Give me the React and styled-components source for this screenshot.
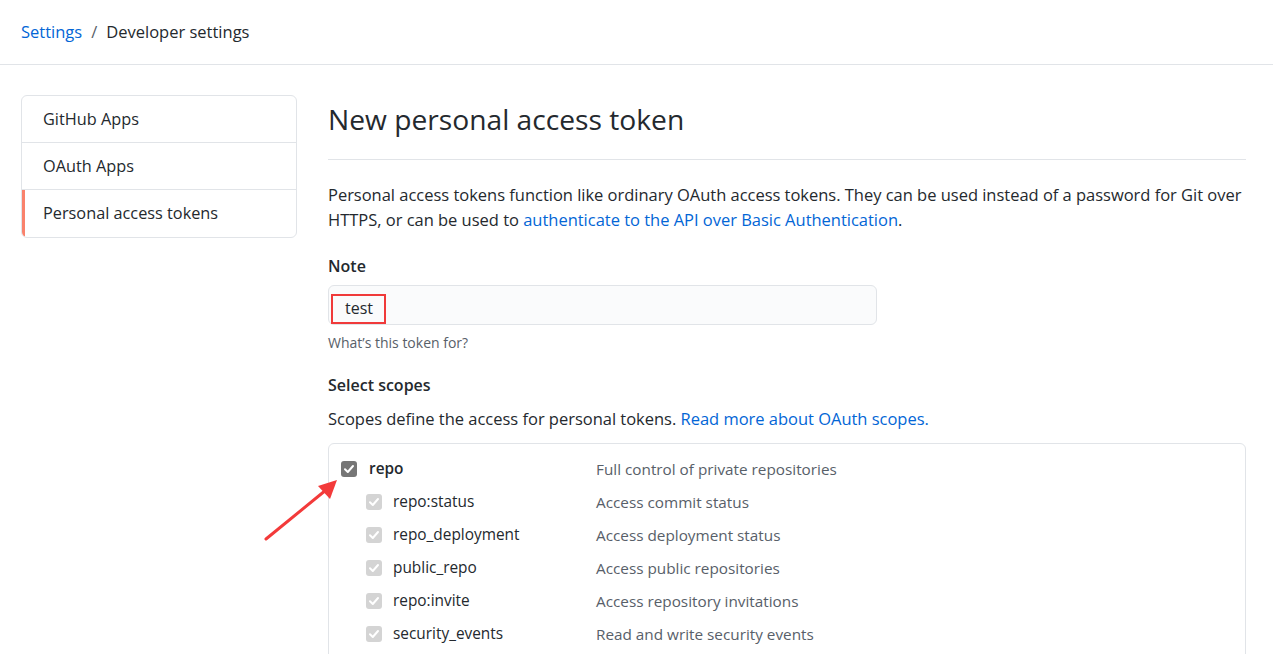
import React from "react";
import styled, { createGlobalStyle } from "styled-components";

const Global = createGlobalStyle`
  html, body { margin: 0; padding: 0; background: #fff; }
  body {
    font-family: "Open Sans", "Noto Sans", sans-serif;
    color: #24292e;
    font-size: 15px;
    overflow: hidden;
  }
  * { box-sizing: border-box; }
`;

const Page = styled.div`
  position: relative;
  width: 1273px;
  height: 654px;
  overflow: hidden;
`;

const Header = styled.header`
  height: 65px;
  border-bottom: 1px solid #e1e4e8;
  display: flex;
  align-items: center;
  padding: 0 21px 2px;
  font-size: 16.5px;
`;

const Crumb = styled.a`
  color: ${(p) => (p.$link ? "#0366d6" : "#24292e")};
  text-decoration: none;
`;

const Sep = styled.span`
  color: #586069;
  margin: 0 9px;
`;

const Body = styled.div`
  display: flex;
  gap: 31px;
  padding: 30px 27px 0 21px;
`;

const SideNav = styled.nav`
  width: 276px;
  flex: none;
  border: 1px solid #e1e4e8;
  border-radius: 6px;
  align-self: flex-start;
  overflow: hidden;
`;

const NavItem = styled.a`
  display: block;
  height: 47px;
  line-height: 46px;
  padding-left: ${(p) => (p.$active ? "18px" : "21px")};
  border-left: ${(p) => (p.$active ? "3px solid #f9826c" : "none")};
  border-bottom: ${(p) => (p.$last ? "none" : "1px solid #e1e4e8")};
  color: #24292e;
  font-size: 16.3px;
  text-decoration: none;
`;

const Main = styled.main`
  flex: 1;
  min-width: 0;
`;

const Title = styled.h1`
  margin: 0;
  font-size: 28.2px;
  font-weight: 400;
  line-height: 48px;
  padding-bottom: 16px;
  border-bottom: 1px solid #e1e4e8;
  margin-bottom: 22px;
`;

const Para = styled.p`
  margin: 0 0 ${(p) => (p.$tight ? "0" : "22px")};
  line-height: 25px;
  font-size: 16.5px;
  letter-spacing: -0.02px;
`;

const Link = styled.a`
  color: #0366d6;
  text-decoration: none;
`;

const Label = styled.div`
  font-weight: 600;
  font-size: 16px;
  line-height: 24px;
  margin-bottom: ${(p) => (p.$wide ? "9px" : "7px")};
`;

const InputBox = styled.div`
  width: 549px;
  height: 40px;
  border: 1px solid #e1e4e8;
  border-radius: 6px;
  background: #fafbfc;
  display: flex;
  padding: 0 2px;
`;

const Highlight = styled.span`
  border: 2px solid #f03a3a;
  height: 30px;
  margin-top: 8px;
  width: 55px;
  padding-left: 12px;
  line-height: 25px;
  font-size: 16px;
`;

const Hint = styled.div`
  font-size: 14px;
  color: #586069;
  margin-top: 8px;
  margin-bottom: 21px;
`;

const ScopeBox = styled.div`
  margin-top: 12px;
  border: 1px solid #e1e4e8;
  border-radius: 6px;
  padding: 8px 12px 0;
  height: 240px;
`;

const Row = styled.div`
  display: flex;
  align-items: center;
  height: 33px;
  padding-left: ${(p) => (p.$child ? "25px" : "0")};
`;

const Box = styled.span`
  width: 16px;
  height: 16px;
  border-radius: 3px;
  background: ${(p) => (p.$child ? "#d4d4d4" : "#767676")};
  display: inline-flex;
  align-items: center;
  justify-content: center;
  flex: none;
`;

const ScopeName = styled.span`
  width: ${(p) => (p.$child ? "214px" : "239px")};
  padding-left: ${(p) => (p.$child ? "11px" : "12px")};
  font-weight: ${(p) => (p.$child ? 400 : 600)};
  font-size: 15.4px;
`;

const Desc = styled.span`
  color: #586069;
  font-size: 15.3px;
`;

const Arrow = styled.svg`
  position: absolute;
  left: 260px;
  top: 474px;
`;

const Check = () => (
  <svg width="12" height="12" viewBox="0 0 12 12">
    <path d="M2 6.3 L4.8 9 L10 3" fill="none" stroke="#fff" strokeWidth="2" strokeLinecap="round" strokeLinejoin="round" />
  </svg>
);

const scopes = [
  ["repo:status", "Access commit status"],
  ["repo_deployment", "Access deployment status"],
  ["public_repo", "Access public repositories"],
  ["repo:invite", "Access repository invitations"],
  ["security_events", "Read and write security events"],
];

export default function App() {
  return (
    <Page>
      <Global />
      <Header>
        <Crumb $link href="#">Settings</Crumb>
        <Sep>/</Sep>
        <Crumb>Developer settings</Crumb>
      </Header>
      <Body>
        <SideNav>
          <NavItem href="#">GitHub Apps</NavItem>
          <NavItem href="#">OAuth Apps</NavItem>
          <NavItem href="#" $active $last>Personal access tokens</NavItem>
        </SideNav>
        <Main>
          <Title>New personal access token</Title>
          <Para>
            Personal access tokens function like ordinary OAuth access tokens. They can be used instead of a password for Git over
            HTTPS, or can be used to <Link href="#">authenticate to the API over Basic Authentication</Link>.
          </Para>
          <Label>Note</Label>
          <InputBox>
            <Highlight>test</Highlight>
          </InputBox>
          <Hint>What’s this token for?</Hint>
          <Label $wide>Select scopes</Label>
          <Para as="div" $tight>
            Scopes define the access for personal tokens. <Link href="#">Read more about OAuth scopes.</Link>
          </Para>
          <ScopeBox>
            <Row>
              <Box><Check /></Box>
              <ScopeName>repo</ScopeName>
              <Desc>Full control of private repositories</Desc>
            </Row>
            {scopes.map(([n, d]) => (
              <Row $child key={n}>
                <Box $child><Check /></Box>
                <ScopeName $child>{n}</ScopeName>
                <Desc>{d}</Desc>
              </Row>
            ))}
          </ScopeBox>
        </Main>
      </Body>
      <Arrow width="90" height="70" viewBox="0 0 90 70">
        <path d="M6 65 L66 16" stroke="#f33a3a" strokeWidth="3" strokeLinecap="round" />
        <path d="M77 6 L58 12 L70 25 Z" fill="#f33a3a" />
      </Arrow>
    </Page>
  );
}
